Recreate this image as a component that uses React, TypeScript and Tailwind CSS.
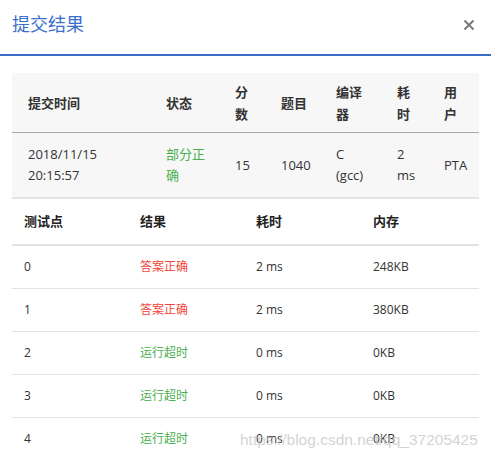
import React from "react";

const FONT = { fontFamily: '"Open Sans", "Noto Sans CJK SC", sans-serif' };

const summaryHead: { lines: string[]; w: string }[] = [
  { lines: ["提交时间"], w: "w-[138px]" },
  { lines: ["状态"], w: "w-[69px]" },
  { lines: ["分", "数"], w: "w-[46px]" },
  { lines: ["题目"], w: "w-[55px]" },
  { lines: ["编译", "器"], w: "w-[61px]" },
  { lines: ["耗", "时"], w: "w-[47px]" },
  { lines: ["用", "户"], w: "flex-1" },
];

const summaryRow: { lines: string[]; color?: string }[] = [
  { lines: ["2018/11/15", "20:15:57"] },
  { lines: ["部分正", "确"], color: "text-[#4caf50]" },
  { lines: ["15"] },
  { lines: ["1040"] },
  { lines: ["C", "(gcc)"] },
  { lines: ["2", "ms"] },
  { lines: ["PTA"] },
];

const cases = [
  { id: "0", result: "答案正确", ok: true, time: "2 ms", mem: "248KB" },
  { id: "1", result: "答案正确", ok: true, time: "2 ms", mem: "380KB" },
  { id: "2", result: "运行超时", ok: false, time: "0 ms", mem: "0KB" },
  { id: "3", result: "运行超时", ok: false, time: "0 ms", mem: "0KB" },
  { id: "4", result: "运行超时", ok: false, time: "0 ms", mem: "0KB" },
];

export default function App() {
  return (
    <div className="relative w-[491px] h-[452px] overflow-hidden bg-white" style={FONT}>
      {/* 标题栏 */}
      <div className="flex h-[56px] items-center justify-between border-b-2 border-[#3b6cc6] pl-3 pr-4 pb-[6px]">
        <span className="text-[18px] text-[#3b6fcc]">提交结果</span>
        <svg width="12" height="12" viewBox="0 0 12 12" className="mt-[2px]">
          <path d="M1.5 1.5 L10.5 10.5 M10.5 1.5 L1.5 10.5" stroke="#7a7a7a" strokeWidth="2" />
        </svg>
      </div>

      <div className="px-3 pt-[17px]">
        {/* 提交概要 */}
        <div className="bg-[#f7f7f7] text-[13px]">
          <div className="flex h-[60px] items-center border-b border-[#aaaaaa] pl-4 font-semibold text-[#333] leading-[22px]">
            {summaryHead.map((c, i) => (
              <div key={i} className={c.w}>
                {c.lines.map((l) => (
                  <div key={l}>{l}</div>
                ))}
              </div>
            ))}
          </div>
          <div className="flex h-[66px] items-center border-b-2 border-[#e3e3e3] pl-4 text-[#333] leading-[21px]">
            {summaryRow.map((c, i) => (
              <div key={i} className={`${summaryHead[i].w} ${c.color ?? ""}`}>
                {c.lines.map((l) => (
                  <div key={l}>{l}</div>
                ))}
              </div>
            ))}
          </div>
        </div>

        {/* 测试点 */}
        <div className="grid grid-cols-[116px_116px_117px_1fr] h-[47px] items-center border-b-2 border-[#dfe2e6] pl-3 text-[13px] font-semibold text-[#222]">
          <div>测试点</div>
          <div>结果</div>
          <div>耗时</div>
          <div>内存</div>
        </div>
        {cases.map((r) => (
          <div
            key={r.id}
            className="grid grid-cols-[116px_116px_117px_1fr] h-[43px] items-center border-b border-[#e3e3e3] pl-3 text-[12px] text-[#333]"
          >
            <div>{r.id}</div>
            <div className={r.ok ? "text-[#f2453a]" : "text-[#4caf50]"}>{r.result}</div>
            <div>{r.time}</div>
            <div>{r.mem}</div>
          </div>
        ))}
      </div>

      {/* 水印 */}
      <div
        className="pointer-events-none absolute left-[240px] top-[432px] whitespace-nowrap text-[15.5px] leading-none text-[#c8c8c8]/80"
        style={{ fontFamily: '"Liberation Sans", Arial, sans-serif' }}
      >
        https://blog.csdn.net/qq_37205425
      </div>
    </div>
  );
}
